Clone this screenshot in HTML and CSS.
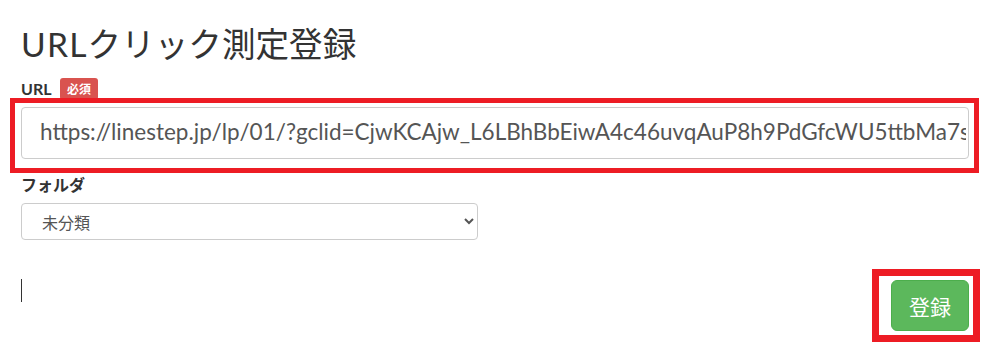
FILE: index.html
```html
<!DOCTYPE html>
<html lang="ja">
<head>
<meta charset="utf-8">
<title>URLクリック測定登録</title>
<link rel="stylesheet" href="styles.css">
</head>
<body>
<div class="page">
  <h1 class="title"><span class="title-latin">URL</span>クリック測定登録</h1>
  <div class="label-row">
    <span class="label">URL</span>
    <span class="badge">必須</span>
  </div>
  <div class="highlight highlight-url">
    <input class="url-input" type="text" value="https://linestep.jp/lp/01/?gclid=CjwKCAjw_L6LBhBbEiwA4c46uvqAuP8h9PdGfcWU5ttbMa7sQxR2hL0BoCkYQAvD_BwE">
  </div>
  <div class="label folder-label">フォルダ</div>
  <select class="folder-select">
    <option>未分類</option>
  </select>
  <div class="action-row">
    <span class="caret"></span>
    <div class="highlight highlight-btn">
      <button class="submit-btn" type="button">登録</button>
    </div>
  </div>
</div>
</body>
</html>
```
FILE: styles.css
```css
* { box-sizing: border-box; }
html, body { margin: 0; padding: 0; background: #fff; }
body {
  font-family: Lato, "Noto Sans CJK JP", sans-serif;
  color: #333;
}
.page { padding-top: 24px; }
.title {
  margin: 0 0 0 21px;
  height: 44px;
  font-family: Lato, "Noto Sans CJK JP", sans-serif;
  font-size: 33.6px;
  font-weight: 400;
  line-height: 40px;
  white-space: nowrap;
  color: #333;
}
.title-latin {
  letter-spacing: 1.2px;
}
.label-row {
  display: flex;
  align-items: center;
  gap: 9px;
  height: 22px;
  margin: 10px 0 0 21px;
}
.label {
  font-size: 16px;
  font-weight: 700;
  line-height: 22px;
  color: #333;
}
.badge {
  background: #d9534f;
  color: #fff;
  font-family: "Noto Sans CJK JP", sans-serif;
  font-size: 12px;
  font-weight: 700;
  line-height: 18px;
  padding: 2px 6.5px;
  border-radius: 3px;
}
.highlight {
  position: relative;
  border-style: solid;
  border-color: #ed1c24;
  background: #fff;
}
.highlight-url {
  width: 969px;
  margin: -2px 0 0 10px;
  border-width: 5px;
  padding: 4px 5px 9px 6px;
}
.url-input {
  display: block;
  width: 948px;
  height: 52px;
  border: 1px solid #ccc;
  border-radius: 4px;
  padding: 0 2px 3px 18px;
  font-family: Lato, "Noto Sans CJK JP", sans-serif;
  font-size: 22.5px;
  color: #555;
  background: #fff;
  outline: none;
}
.folder-label {
  display: block;
  margin: 1px 0 0 21px;
}
.folder-select {
  display: block;
  width: 457px;
  height: 37px;
  margin: 7px 0 0 21px;
  border: 1px solid #ccc;
  border-radius: 4px;
  padding: 0 8px 0 16px;
  font-family: "Noto Sans CJK JP", sans-serif;
  font-size: 16px;
  color: #555;
  background-color: #fff;
}
.action-row {
  display: flex;
  justify-content: space-between;
  align-items: flex-start;
  margin-top: 29px;
}
.caret {
  display: block;
  width: 1px;
  height: 23px;
  margin: 10px 0 0 21px;
  background: #333;
}
.highlight-btn {
  margin-right: 6px;
  border-width: 7px;
  padding: 4px 4px 4px 12px;
}
.submit-btn {
  display: block;
  width: 78px;
  height: 51px;
  background: #5cb85c;
  border: 1px solid #4cae4c;
  border-radius: 6px;
  color: #fff;
  font-family: "Noto Sans CJK JP", sans-serif;
  font-size: 21px;
  padding: 0;
}
```
